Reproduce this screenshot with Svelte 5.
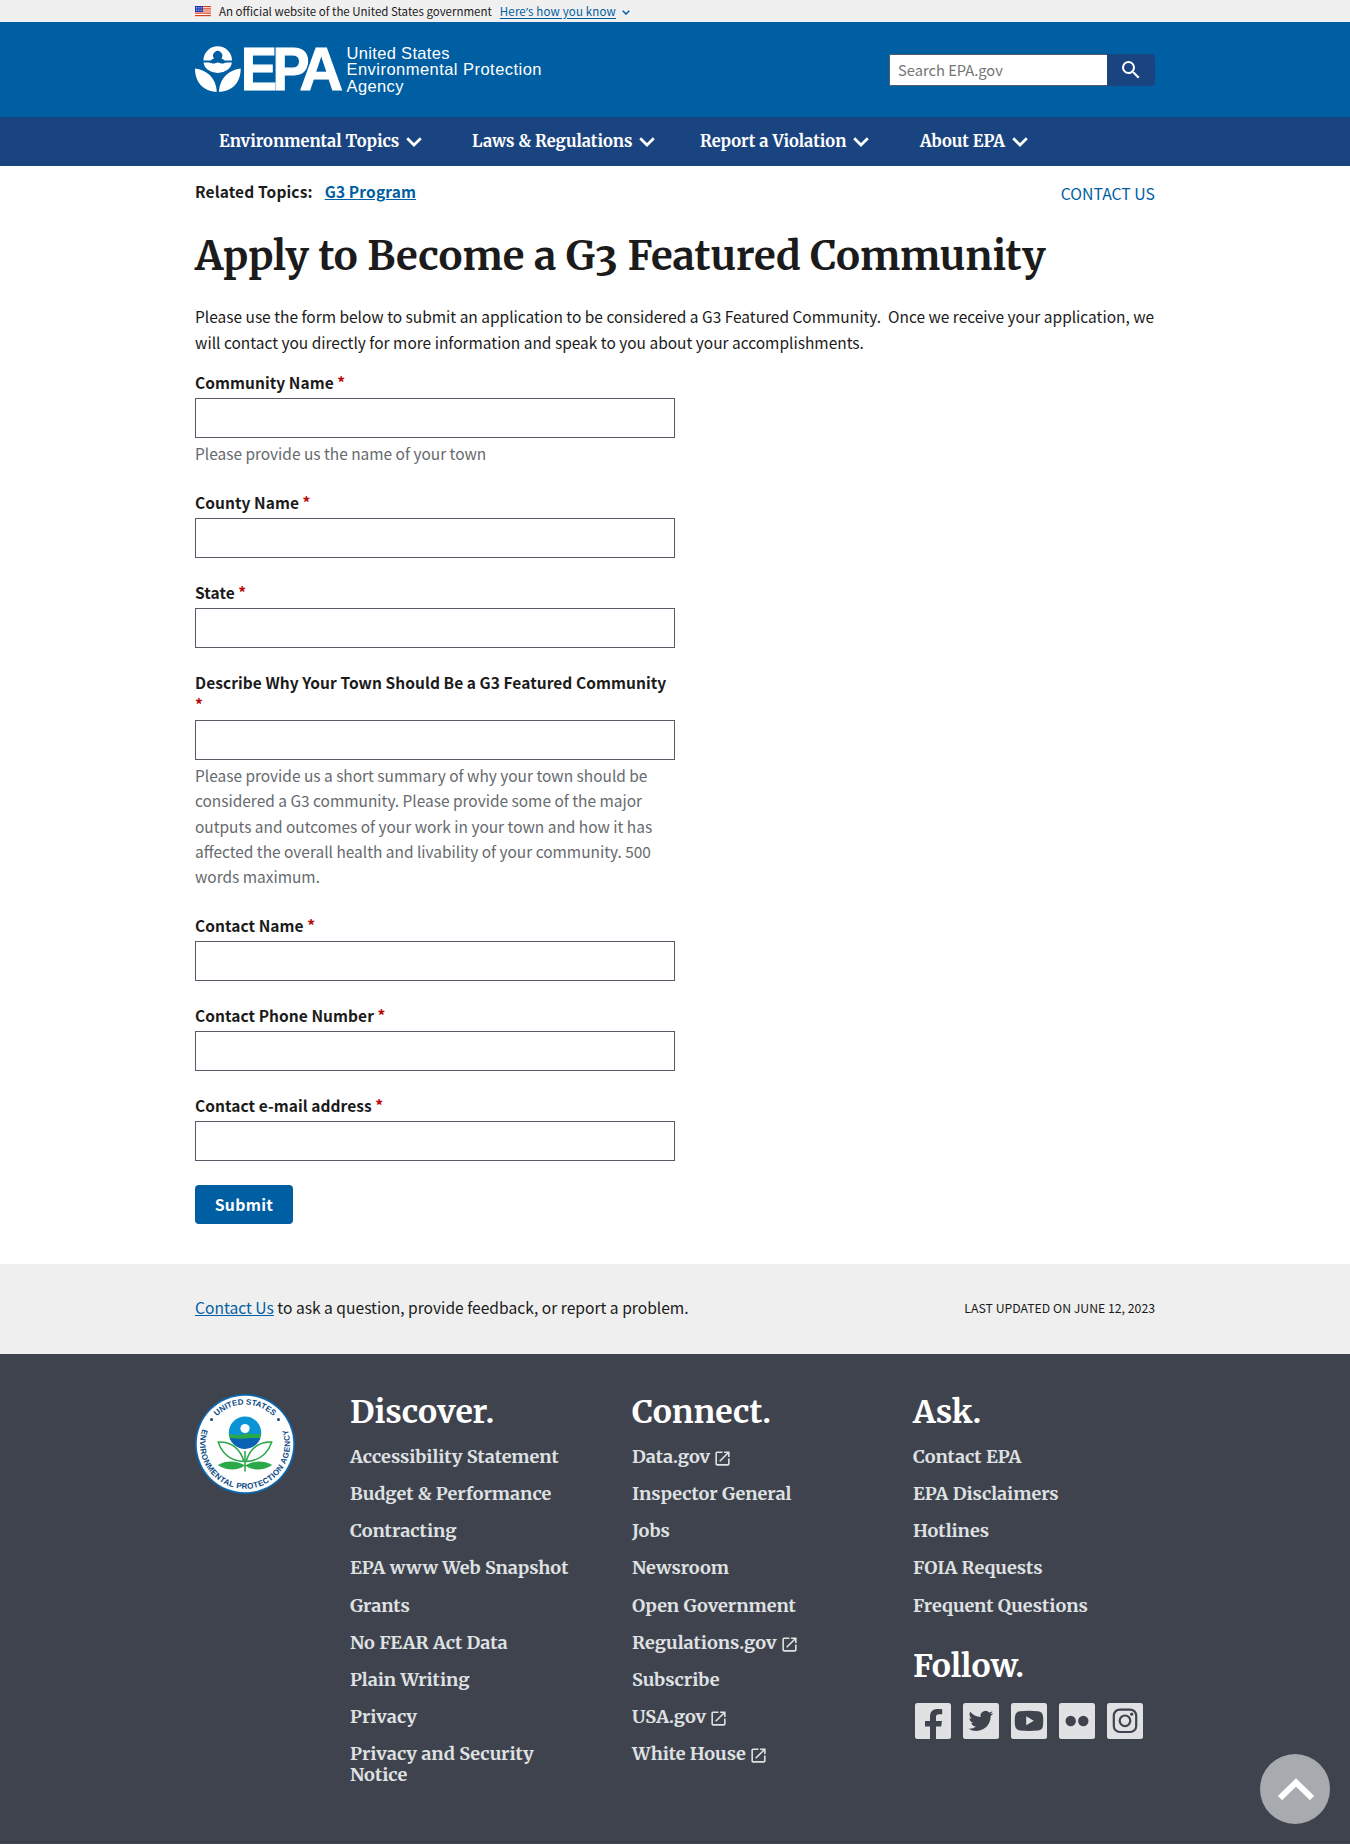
<script>
  const navItems = ['Environmental Topics', 'Laws & Regulations', 'Report a Violation', 'About EPA'];

  const fields = [
    { id: 'community', label: 'Community Name', hint: 'Please provide us the name of your town' },
    { id: 'county', label: 'County Name' },
    { id: 'state', label: 'State' },
    {
      id: 'describe',
      label: 'Describe Why Your Town Should Be a G3 Featured Community',
      hint: 'Please provide us a short summary of why your town should be considered a G3 community. Please provide some of the major outputs and outcomes of your work in your town and how it has affected the overall health and livability of your community. 500 words maximum.'
    },
    { id: 'contact', label: 'Contact Name' },
    { id: 'phone', label: 'Contact Phone Number' },
    { id: 'email', label: 'Contact e-mail address' }
  ];

  const discover = [
    'Accessibility Statement',
    'Budget & Performance',
    'Contracting',
    'EPA www Web Snapshot',
    'Grants',
    'No FEAR Act Data',
    'Plain Writing',
    'Privacy',
    'Privacy and Security Notice'
  ].map((text) => ({ text }));

  const connect = [
    { text: 'Data.gov', external: true },
    { text: 'Inspector General' },
    { text: 'Jobs' },
    { text: 'Newsroom' },
    { text: 'Open Government' },
    { text: 'Regulations.gov', external: true },
    { text: 'Subscribe' },
    { text: 'USA.gov', external: true },
    { text: 'White House', external: true }
  ];

  const ask = ['Contact EPA', 'EPA Disclaimers', 'Hotlines', 'FOIA Requests', 'Frequent Questions'].map(
    (text) => ({ text })
  );
</script>

{#snippet linkList(items)}
  <ul class="links">
    {#each items as item}
      <li>
        <a href="#top">{item.text}</a>{#if item.external}<svg class="external" viewBox="0 0 24 24" aria-hidden="true"><path d="M19 19H5V5h7V3H5a2 2 0 0 0-2 2v14c0 1.1.89 2 2 2h14c1.1 0 2-.9 2-2v-7h-2v7zM14 3v2h3.59l-9.83 9.83 1.41 1.41L19 6.41V10h2V3h-7z" /></svg>{/if}
      </li>
    {/each}
  </ul>
{/snippet}

<div class="page" id="top">
  <div class="banner">
    <div class="container banner-row">
      <svg class="flag" viewBox="0 0 16 11" aria-hidden="true">
        <rect width="16" height="11" fill="#fff" />
        <path d="M0 .6h16M0 2.8h16M0 5h16M0 7.2h16M0 9.6h16" stroke="#db3e1f" stroke-width="1.2" />
        <rect width="8" height="6" fill="#1e33b1" />
        <path d="M1 1.5h6.5M1 3h6.5M1 4.5h6.5" stroke="#fff" stroke-width=".7" stroke-dasharray=".8 1" />
      </svg>
      <span class="banner-text">An official website of the United States government</span>
      <a class="banner-link" href="#top">Here<span class="apostrophe">’</span>s how you know</a>
      <svg class="banner-chevron" viewBox="0 0 8 5" aria-hidden="true"><path d="M.7.7 4 4 7.3.7" /></svg>
    </div>
  </div>

  <header class="header">
    <div class="container header-row">
      <svg class="logo" viewBox="195 44 350 52" role="img" aria-label="US EPA">
        <g fill="#fff">
          <path d="M203.4 60.6a14.3 14.3 0 0 1 28.6 0h-6.2c-1.6 0-2.4-1.6-4.4-2.2a4.6 4.6 0 1 0-7.4 0c-2 .6-2.8 2.2-4.4 2.2z" />
          <path d="M203.5 62.4h5c2 0 3 1.2 5 1.2s2.6-1.2 4.3-1.2 2.5 1.2 4.5 1.2 2.5-1.2 4.5-1.2h5.1a14.3 12 0 0 1-28.4 0z" />
          <path d="M195 68.5c11.5 1.5 21 9 21.8 23.3C203.5 91.500 195 82.500 195 68.500z" />
          <path d="M240.700 68.500c-11.500 1.500-21 9-21.800 23.300 13.300-.3 21.800-9.300 21.800-23.300z" />
          <text class="wordmark" x="241" y="90.200" textLength="36" lengthAdjust="spacingAndGlyphs">E</text>
          <text class="wordmark" x="272.500" y="90.200" textLength="37" lengthAdjust="spacingAndGlyphs">P</text>
          <text class="wordmark" x="299.600" y="90.200" textLength="43.500" lengthAdjust="spacingAndGlyphs">A</text>
          <text class="tagline" x="346.500" y="58.500" textLength="103">United States</text>
          <text class="tagline" x="346.500" y="75" textLength="195">Environmental Protection</text>
          <text class="tagline" x="346.500" y="91.500" textLength="57">Agency</text>
        </g>
      </svg>
      <form class="search" onsubmit={(e) => e.preventDefault()}>
        <input class="search-input" type="search" placeholder="Search EPA.gov" aria-label="Search EPA.gov" />
        <button class="search-button" aria-label="Search">
          <svg viewBox="0 0 24 24" aria-hidden="true"><path d="M15.500 14h-.79l-.28-.27A6.471 6.471 0 0 0 16 9.500 6.500 6.500 0 1 0 9.500 16c1.610 0 3.090-.59 4.230-1.570l.27.28v.79l5 4.990L20.490 19l-4.990-5zm-6 0C7.010 14 5 11.990 5 9.500S7.010 5 9.500 5 14 7.010 14 9.500 11.990 14 9.500 14z" /></svg>
        </button>
      </form>
    </div>
  </header>

  <nav class="nav">
    <div class="container nav-row">
      {#each navItems as item}
        <button class="nav-item">
          <span>{item}</span>
          <svg viewBox="0 0 16 10" aria-hidden="true"><path d="M1.200 1.200 8 8l6.800-6.800" /></svg>
        </button>
      {/each}
    </div>
  </nav>

  <main class="container main">
    <div class="topline">
      <div class="related"><span>Related Topics:</span><a href="#top">G3 Program</a></div>
      <a class="contact" href="#top">CONTACT US</a>
    </div>
    <h1>Apply to Become a G<span class="oldstyle">3</span> Featured Community</h1>
    <p class="intro">
      Please use the form below to submit an application to be considered a G3 Featured Community.&nbsp; Once we receive your
      application, we will contact you directly for more information and speak to you about your accomplishments.
    </p>
    <form class="form" onsubmit={(e) => e.preventDefault()}>
      {#each fields as field}
        <div class="field">
          <label for={field.id}>{field.label} <span class="required">*</span></label>
          <input id={field.id} type="text" />
          {#if field.hint}<div class="hint">{field.hint}</div>{/if}
        </div>
      {/each}
      <button class="submit">Submit</button>
    </form>
  </main>

  <div class="feedback">
    <div class="container feedback-row">
      <p><a href="#top">Contact Us</a> to ask a question, provide feedback, or report a problem.</p>
      <span class="updated">LAST UPDATED ON JUNE 12, 2023</span>
    </div>
  </div>

  <footer class="footer">
    <div class="container footer-row">
      <svg class="seal" viewBox="0 0 100 100" role="img" aria-label="United States Environmental Protection Agency">
        <defs>
          <path id="arc-top" d="M10.500 50a39.500 39.500 0 0 1 79 0" />
          <path id="arc-bottom" d="M9.500 30.250a45 45 0 1 0 81 0" />
          <clipPath id="bloom"><circle cx="50" cy="38.700" r="16.200" /></clipPath>
        </defs>
        <circle cx="50" cy="50" r="50" fill="#0d67ad" />
        <circle cx="50" cy="50" r="48.300" fill="#fff" />
        <text class="seal-text"><textPath href="#arc-top" startOffset="50%" text-anchor="middle">UNITED STATES</textPath></text>
        <text class="seal-text seal-ring"><textPath href="#arc-bottom" startOffset="50%" text-anchor="middle">ENVIRONMENTAL PROTECTION AGENCY</textPath></text>
        <circle cx="16.500" cy="25.500" r="1.500" fill="#0b4a86" />
        <circle cx="83.500" cy="25.500" r="1.500" fill="#0b4a86" />
        <g clip-path="url(#bloom)">
          <path d="M30 20h40v22H30z" fill="#0a94d6" />
          <path d="M30 39.500c6 0 8 1.500 12 1.500s6-1.500 10-1.500 7 1 10 .5 5-.5 8-.5v8H30z" fill="#2ba84a" />
          <path d="M30 44.300c6-.8 10 .6 16 .4s12-1.200 24-.4V60H30z" fill="#0a62b5" />
        </g>
        <circle cx="50" cy="34.500" r="4.600" fill="#fff" />
        <g fill="#fff" stroke="#2ba84a" stroke-width="1.500" stroke-linejoin="round">
          <path d="M23.200 48C37 47.500 45 54.500 49 67.500 37 67 27.500 60.500 23.200 48z" />
          <path d="M76.800 48C63 47.500 55 54.500 51 67.500c12-.5 21.500-7 25.800-19.500z" />
        </g>
        <g fill="#2ba84a">
          <path d="M22.700 71c9-5 19-4.500 27.300.5-8 5.500-18 5.500-27.300-.5zM77.300 71c-9-5-19-4.500-27.300.5 8 5.500 18 5.500 27.300-.5z" />
          <path d="M49.200 57h1.600v20.500h-1.600z" />
        </g>
      </svg>
      <section class="column">
        <h2>Discover.</h2>
        {@render linkList(discover)}
      </section>
      <section class="column">
        <h2>Connect.</h2>
        {@render linkList(connect)}
      </section>
      <section class="column">
        <h2>Ask.</h2>
        {@render linkList(ask)}
        <h2 class="follow">Follow.</h2>
        <div class="social">
          <svg viewBox="0 0 40 40" role="img" aria-label="Facebook">
            <rect x="2" y="2" width="36" height="36" rx="2.500" />
            <path class="glyph" d="M17 38.100V25.500h-5V20h5v-4c0-5.500 2.700-8 8-8 1.600 0 3 .1 4.200.3v4.900h-3.200c-2.200 0-3 .9-3 2.700V20h6l-.8 5.500H23v12.600z" />
          </svg>
          <svg viewBox="0 0 40 40" role="img" aria-label="Twitter">
            <rect x="2" y="2" width="36" height="36" rx="2.500" />
            <path class="glyph" transform="translate(7.500 7.500) scale(1.030)" d="M23.953 4.570a10 10 0 0 1-2.825.775 4.958 4.958 0 0 0 2.163-2.723c-.951.555-2.005.959-3.127 1.184a4.920 4.920 0 0 0-8.384 4.482C7.690 8.095 4.067 6.130 1.640 3.162a4.822 4.822 0 0 0-.666 2.475c0 1.710.87 3.213 2.188 4.096a4.904 4.904 0 0 1-2.228-.616v.06a4.923 4.923 0 0 0 3.946 4.827 4.996 4.996 0 0 1-2.212.085 4.936 4.936 0 0 0 4.604 3.417 9.867 9.867 0 0 1-6.102 2.105c-.39 0-.779-.023-1.170-.067a13.995 13.995 0 0 0 7.557 2.209c9.053 0 13.998-7.496 13.998-13.985 0-.21 0-.42-.015-.63A9.935 9.935 0 0 0 24 4.590z" />
          </svg>
          <svg viewBox="0 0 40 40" role="img" aria-label="YouTube">
            <rect x="2" y="2" width="36" height="36" rx="2.500" />
            <path class="glyph" fill-rule="evenodd" d="M11 10.200q9-.8 18 0 4.600.4 5 5 .5 4.700 0 9.400-.4 4.600-5 5-9 .8-18 0-4.600-.4-5-5-.5-4.700 0-9.400.4-4.600 5-5zM17.200 15.300v9l7.600-4.500z" />
          </svg>
          <svg viewBox="0 0 40 40" role="img" aria-label="Flickr">
            <rect x="2" y="2" width="36" height="36" rx="2.500" />
            <circle class="glyph" cx="13.700" cy="20" r="5.200" />
            <circle class="glyph" cx="26.300" cy="20" r="5.200" />
          </svg>
          <svg viewBox="0 0 40 40" role="img" aria-label="Instagram">
            <rect x="2" y="2" width="36" height="36" rx="2.500" />
            <rect class="outline" x="8.800" y="8.600" width="22.400" height="22.400" rx="6" />
            <circle class="outline" cx="20" cy="19.800" r="5.300" />
            <circle class="glyph" cx="26.700" cy="13.200" r="1.600" />
          </svg>
        </div>
      </section>
    </div>
    <div class="footer-rule"></div>
  </footer>

  <a class="to-top" href="#top" aria-label="Back to top">
    <svg viewBox="0 0 36 22" aria-hidden="true"><path d="M2 20 18 4.500 34 20" /></svg>
  </a>
</div>

<style>
  :global(body) {
    margin: 0;
    background: #fff;
  }

  .page {
    position: relative;
    height: 1844px;
    overflow: hidden;
    display: flex;
    flex-direction: column;
    color: #1b1b1b;
    font-family: 'Noto Sans CJK SC', 'Noto Sans', sans-serif;
    font-size: 15.5px;
    line-height: 26px;
  }

  .page * {
    box-sizing: border-box;
  }

  a {
    color: #005ea2;
  }

  button,
  input {
    font: inherit;
  }

  .container {
    width: 960px;
    margin: 0 auto;
  }

  .banner {
    height: 22px;
    background: #f0f0f0;
    font-size: 11.5px;
    line-height: 21px;
  }

  .banner-row {
    display: flex;
    align-items: center;
    height: 22px;
  }

  .flag {
    width: 16px;
    height: 11px;
    margin-right: 8px;
  }

  .banner-link {
    margin-left: 8px;
    letter-spacing: 0.16px;
    text-underline-offset: 2px;
  }

  .apostrophe {
    font-family: 'Noto Sans', sans-serif;
  }

  .banner-chevron {
    width: 8px;
    height: 5px;
    margin: 2px 0 0 6px;
  }

  .banner-chevron path {
    fill: none;
    stroke: #005ea2;
    stroke-width: 1.5;
  }

  .header {
    height: 95px;
    background: #005ea2;
  }

  .header-row {
    display: flex;
    justify-content: space-between;
    align-items: flex-start;
    padding-top: 22px;
  }

  .logo {
    width: 350px;
    height: 52px;
    overflow: visible;
  }

  .wordmark {
    font: bold 62px 'Liberation Sans', Arial, sans-serif;
    stroke: #fff;
    stroke-width: 1.2;
  }

  .tagline {
    font: 16.5px 'Liberation Sans', Arial, sans-serif;
  }

  .search {
    display: flex;
    margin-top: 10px;
  }

  .search-input {
    width: 218px;
    height: 32px;
    padding: 0 0 2px 8px;
    border: 1px solid #565c65;
    border-right: 0;
    border-radius: 0;
    background: #fff;
    outline: 0;
    font-size: 14.7px;
  }

  .search-input::placeholder {
    color: #757575;
  }

  .search-button {
    display: flex;
    justify-content: center;
    align-items: center;
    width: 48px;
    height: 32px;
    padding: 0;
    border: 0;
    border-radius: 0 4px 4px 0;
    background: #1a4480;
  }

  .search-button svg {
    width: 24px;
    height: 24px;
    fill: #fff;
  }

  .nav {
    height: 49px;
    background: #1a4480;
  }

  .nav-row {
    display: grid;
    grid-template-columns: 253px 228px 220px auto;
    height: 49px;
    padding: 0 0 1px 24px;
  }

  .nav-item {
    display: flex;
    align-items: center;
    gap: 7px;
    padding: 0;
    border: 0;
    background: none;
    color: #fff;
    font: bold 16.45px Merriweather, 'DejaVu Serif Condensed', serif;
    white-space: nowrap;
  }

  .nav-item svg {
    width: 16px;
    height: 10px;
    margin-top: 2px;
  }

  .nav-item path {
    fill: none;
    stroke: #fff;
    stroke-width: 2.7;
  }

  .main {
    height: 1098px;
    padding-top: 12px;
  }

  .topline {
    display: flex;
    justify-content: space-between;
    height: 54px;
  }

  .related {
    display: flex;
    gap: 12px;
    font-weight: bold;
    letter-spacing: 0.14px;
  }

  .contact {
    padding-top: 3px;
    font-size: 15.8px;
    text-decoration: none;
  }

  h1 {
    margin: 0;
    font: bold 40.05px / 48px Merriweather, 'DejaVu Serif Condensed', serif;
    white-space: nowrap;
  }

  .oldstyle {
    vertical-align: -0.16em;
    line-height: 0;
  }

  .intro {
    margin: 23px -10px 0 0;
    font-size: 15.48px;
  }

  .form {
    width: 480px;
    margin-top: 17px;
  }

  .field {
    margin-bottom: 24px;
  }

  .field label {
    display: block;
    padding-right: 6px;
    margin: -1px 0 5px;
    font-weight: bold;
    line-height: 22px;
    letter-spacing: 0.06px;
  }

  .required {
    color: #b50909;
  }

  .field input {
    display: block;
    width: 480px;
    height: 40px;
    padding: 8px;
    border: 1px solid #565c65;
    border-radius: 0;
  }

  .hint {
    padding: 3px 0 1.4px;
    color: #666a6e;
    font-size: 15.44px;
    line-height: 25.4px;
  }

  .submit {
    display: block;
    width: 98px;
    height: 39px;
    padding: 0;
    border: 0;
    border-radius: 4px;
    background: #005ea2;
    color: #fff;
    font-size: 15.8px;
    font-weight: bold;
    line-height: 35px;
    letter-spacing: 0.3px;
  }

  .feedback {
    height: 90px;
    background: #efefef;
  }

  .feedback-row {
    display: flex;
    justify-content: space-between;
    align-items: center;
    height: 88px;
  }

  .feedback p {
    margin: -2px 0 0;
    font-size: 15.6px;
  }

  .updated {
    font-size: 12.27px;
  }

  .footer {
    display: flex;
    flex: 1;
    flex-direction: column;
    justify-content: space-between;
    padding-bottom: 2px;
    background: #3f434e;
    color: #fff;
  }

  .footer-row {
    display: grid;
    grid-template-columns: 155px 282px 281px 1fr;
    padding-top: 40px;
  }

  .footer-rule {
    height: 1px;
    background: #363a43;
  }

  .seal {
    width: 100px;
    height: 100px;
  }

  .seal-text {
    fill: #0b4a86;
    font: bold 8px 'Liberation Sans', Arial, sans-serif;
  }

  .seal-ring {
    letter-spacing: 0.35px;
  }

  .column {
    width: 226px;
  }

  h2 {
    margin: 0;
    font: bold 32px / 36px Merriweather, 'DejaVu Serif Condensed', serif;
  }

  .links {
    margin: 16px 0 0;
    padding: 0;
    list-style: none;
    font: bold 18.1px / 21px Merriweather, 'DejaVu Serif Condensed', serif;
  }

  .links li {
    margin-bottom: 16.15px;
  }

  .links a {
    color: #dfe1e2;
    text-decoration: none;
  }

  .external {
    width: 19px;
    height: 19px;
    margin: -2px 0 -5px 3px;
    fill: #dfe1e2;
  }

  .follow {
    margin-top: 32.6px;
  }

  .social {
    display: flex;
    gap: 8px;
    width: 240px;
    margin-top: 17px;
  }

  .social svg {
    width: 40px;
    height: 40px;
    flex: none;
    fill: #dfe1e2;
  }

  .social .glyph {
    fill: #3f434e;
  }

  .social .outline {
    fill: none;
    stroke: #3f434e;
    stroke-width: 2.2;
  }

  .to-top {
    position: absolute;
    right: 20px;
    bottom: 20px;
    display: flex;
    justify-content: center;
    align-items: center;
    width: 70px;
    height: 70px;
    border-radius: 50%;
    background: #a7aaaf;
  }

  .to-top svg {
    width: 36px;
    height: 22px;
    margin-left: 2px;
  }

  .to-top path {
    fill: none;
    stroke: #fff;
    stroke-width: 6;
  }
</style>
